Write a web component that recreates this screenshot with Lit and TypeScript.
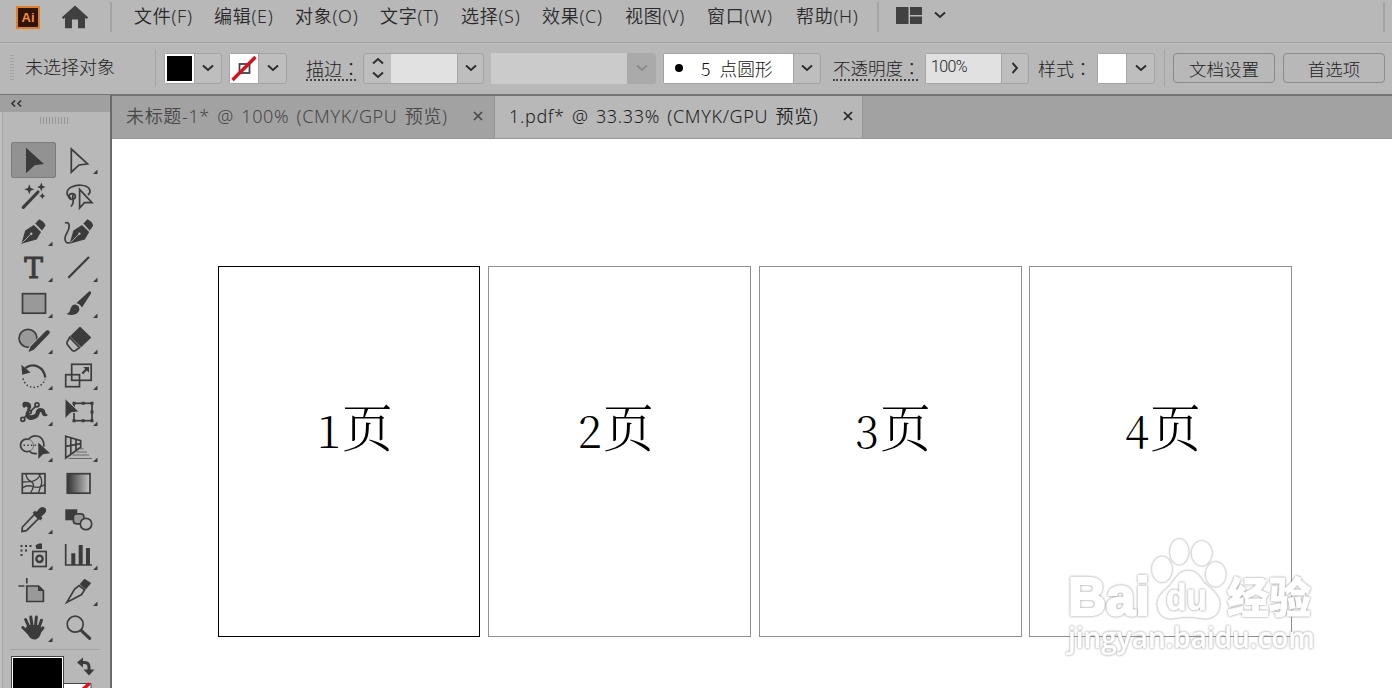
import { LitElement, html, css, svg, nothing } from 'lit';
import type { SVGTemplateResult } from 'lit';
import { customElement, property, state } from 'lit/decorators.js';
import { classMap } from 'lit/directives/class-map.js';

interface Tool {
  id: string;
  icon: SVGTemplateResult;
  flyout?: boolean;
}

const MENUS = ['文件(F)', '编辑(E)', '对象(O)', '文字(T)', '选择(S)', '效果(C)', '视图(V)', '窗口(W)', '帮助(H)'];

// icons share a 45x36 cell, d = dark fill, l = dark outline
const TOOLS: Tool[] = [
  {
    id: 'selection',
    icon: svg`<path class="d" d="M15 5.7 33 22 23.7 23.3 15 31.3Z"/>`,
  },
  {
    id: 'direct-selection',
    flyout: true,
    icon: svg`<path class="l" d="M15.3 7 31.6 21.8 23 23 15.3 30.2Z"/>`,
  },
  {
    id: 'magic-wand',
    icon: svg`
      <path class="l w3" d="M12.3 29.3 27 14"/>
      <path class="d" d="M18.3 6.3 19.7 9.9 23.3 11.3 19.7 12.7 18.3 16.3 16.9 12.7 13.3 11.3 16.9 9.9Z"/>
      <path class="d" d="M30.3 4.6 31.5 7.8 34.6 9 31.5 10.2 30.3 13.4 29.1 10.2 26 9 29.1 7.8Z"/>
      <path class="d" d="M31.3 14.8 32.3 17 34.4 18 32.3 19 31.3 21.2 30.3 19 28.2 18 30.3 17Z"/>`,
  },
  {
    id: 'lasso',
    icon: svg`
      <path class="l" d="M15 19.8C9.5 18 9.8 11.5 15.5 9 21.5 6 30 6.8 33 10.4 34.8 12.8 34 15.2 32 17"/>
      <path class="l" d="M19.4 18.3C19.4 14.5 12.6 14.8 12.8 18.8 13 22.4 19.6 22 19.4 18.3ZM18 16C14 19.5 20.5 22.5 15 28.5"/>
      <path class="l" d="M23.6 11.5V30L28.4 24.7H36Z"/>`,
  },
  {
    id: 'pen',
    flyout: true,
    icon: svg`
      <path class="d" d="M10.4 29.8 14.2 16.6 22.8 10.9 30 18 25.6 25.6Z"/>
      <path class="d" d="M24.2 9.6 28.2 5.2Q32.8 7.2 34.6 11.4L31 16.4Z"/>
      <path class="k" d="M11.5 28.5 20 20"/><circle class="b" cx="20.3" cy="19.8" r="1.2"/>`,
  },
  {
    id: 'curvature',
    icon: svg`
      <path class="d" d="M13.6 29.8 17.4 16.6 26 10.9 33.2 18 28.8 25.6Z"/>
      <path class="d" d="M27.4 9.6 31.4 5.2Q36 7.2 37.2 11.4L33.8 16.4Z"/>
      <path class="k" d="M14.7 28.5 23 20"/><circle class="b" cx="23.4" cy="19.8" r="1.2"/>
      <path class="l" d="M9 9C14.5 7 14 14 10.8 19.3 7.4 24.8 9.3 30.5 14 28.5"/>`,
  },
  {
    id: 'type',
    flyout: true,
    icon: svg`<text class="type" x="22.5" y="28" text-anchor="middle">T</text>`,
  },
  {
    id: 'line',
    flyout: true,
    icon: svg`<path class="l w2" d="M12.3 27.7 33 7"/>`,
  },
  {
    id: 'rectangle',
    flyout: true,
    icon: svg`<rect class="l g" x="11.5" y="7.7" width="23" height="19.5"/>`,
  },
  {
    id: 'paintbrush',
    flyout: true,
    icon: svg`
      <path class="d" d="M20.4 17 33 5.4Q35.6 4.8 35 7.4L26 21.4Q24 17.8 20.4 17Z"/>
      <path class="d" d="M10.2 28Q14 27 14.4 23 16 18.4 19.4 18.6 23.6 19.6 23.4 24 20.6 31 10.2 28Z"/>`,
  },
  {
    id: 'shaper',
    flyout: true,
    icon: svg`
      <circle class="l g" cx="17" cy="16.3" r="9"/>
      <path class="halo" d="M19.5 27.5 37 10.5"/>
      <path class="d" d="M17.5 30 19.5 24.4 35.3 8.6Q37.5 7.8 38.6 9.6 39.2 10.6 38.3 11.8L22.8 27.8Z"/>`,
  },
  {
    id: 'eraser',
    flyout: true,
    icon: svg`
      <path class="d" d="M24 4.5 35.3 15.6 25.2 25.2 14 14.2Z"/>
      <path class="l" d="M13.6 15.5 11 20.2Q10.6 21.6 11.5 22.7L16 28.2Q17.3 29.6 19 28.7L23.5 25.7Z"/>`,
  },
  {
    id: 'rotate',
    flyout: true,
    icon: svg`
      <path class="l w2" d="M14.5 10C22 4 33 9 34.3 19.5"/>
      <path class="d" d="M10.4 6.8 19.6 14.4 11.2 16.8Z"/>
      <path class="dots" d="M12 20.5C14.5 32 30.5 32.5 34 21"/>`,
  },
  {
    id: 'scale',
    flyout: true,
    icon: svg`
      <rect class="l" x="15.7" y="6.3" width="19.5" height="16"/>
      <rect class="l" x="9.7" y="16.7" width="13.8" height="12"/>
      <path class="l w2" d="M26.3 15.5 31 10.8"/><path class="d" d="M27.3 9H33V14.8Z"/>`,
  },
  {
    id: 'width',
    flyout: true,
    icon: svg`
      <path class="d" d="M12.5 8C20 7 22 12 18.5 17 16.5 21.5 21 22.5 24.4 19.5 25 13.5 31 12.5 34 16.5 34.4 20 36 20.5 37 21 34 23.8 30.8 22 30.5 18.5 28.5 16.5 29 21 26.5 23.6 20.5 28.6 13.2 25.5 14.8 18.8 18 13.6 16.5 11 13 14 11 12.5 10.8 9.5 12.5 8Z"/>
      <path class="l" d="M13 24 25 11.8"/>
      <circle class="l b" cx="11.8" cy="25.3" r="2"/><circle class="l b" cx="26" cy="10.8" r="2"/>
      <circle class="l b" cx="18.8" cy="18.2" r="1.5"/>`,
  },
  {
    id: 'free-transform',
    flyout: true,
    icon: svg`
      <rect class="l" x="18" y="9.3" width="18" height="17.4"/>
      <path class="d" d="M16.5 7.8h3v3h-3zM25.7 7.8h3v3h-3zM34.5 7.8h3v3h-3zM34.5 16.5h3v3h-3zM34.5 25.2h3v3h-3zM25.7 25.2h3v3h-3zM16.5 25.2h3v3h-3z"/>
      <path class="d edge" d="M9 4.5 23.2 17.7 14.7 18.9 9 24.8Z"/>`,
  },
  {
    id: 'shape-builder',
    flyout: true,
    icon: svg`
      <path class="l" d="M17.5 9.4C11.8 7.8 8.6 13 9.8 17 11 21 15 22.4 18.5 21.2 20 23 23 24 26 23.5M17.5 9.4C21.5 4.4 30 4.6 32.2 11.4 33 13.4 33.2 15 32.8 16.6"/>
      <path class="l thin" d="M17.5 9.4C23 10.4 25 18.5 18.5 21.2"/>
      <path class="dots" d="M12.5 15.3H28"/>
      <path class="d" d="M27.3 12.5 39 23.3 32 24.3 27.3 29Z"/>`,
  },
  {
    id: 'perspective',
    flyout: true,
    icon: svg`
      <path class="l" d="M9.7 6.2 24.7 10.7V17.3L9.7 28ZM14.8 7.8V24.4M20 9.2V20.6M9.7 16.3 24.7 13.7"/>
      <path class="l thin" d="M24 18.8H27.5M20.5 22H31M16.5 25H33M12.5 28.5H36"/>`,
  },
  {
    id: 'mesh',
    icon: svg`
      <rect class="l" x="11.3" y="7.7" width="22.7" height="19.5"/>
      <path class="l thin2" d="M15 7.7Q15 13 20.3 15.6 25 18.4 19.5 27M27.5 7.7Q33 15 29.5 20.5L27.5 27M11.3 16Q17 15.5 20.3 15.6 28 14 29.5 7.7M11.3 22Q16 18.5 22.3 20.5 28 23 34 18.5"/>`,
  },
  {
    id: 'gradient',
    icon: svg`
      <defs><linearGradient id="ramp"><stop offset="0" stop-color="#333"/><stop offset="1" stop-color="#c4c4c4"/></linearGradient></defs>
      <rect class="l ramp" x="11.3" y="7.7" width="22.7" height="19.5"/>`,
  },
  {
    id: 'eyedropper',
    flyout: true,
    icon: svg`
      <path class="l" d="M11 29.4 11.4 25 23.4 12.4 27.6 16.6 15.4 28.6 11 29.4Z"/>
      <path class="d" d="M21.6 10.8 24 8.8 25.6 9.8 28.8 6Q32.4 3.6 34.6 6.6 36 9 34 11.2L30.4 14.4 31.4 16.2 29.2 18.6Z"/>`,
  },
  {
    id: 'blend',
    icon: svg`
      <rect class="d" x="9.3" y="7.3" width="12" height="11"/>
      <rect class="l g" x="17.4" y="11.8" width="10.5" height="10" rx="3"/>
      <circle class="l b" cx="30" cy="22" r="5.7"/>`,
  },
  {
    id: 'symbol-sprayer',
    flyout: true,
    icon: svg`
      <path class="d" d="M9.5 7h2v2h-2zM14 7h2v2h-2zM18.5 7h2v2h-2zM9.5 11.5h2v2h-2zM14 11.5h2v2h-2zM9.5 16h2v2h-2z"/>
      <path class="d" d="M24.5 7.2 27.8 5.6H31V11H25.4Z"/>
      <rect class="l" x="21.8" y="13.5" width="13.4" height="15"/>
      <circle class="l w2" cx="28.5" cy="20.8" r="3.2"/>`,
  },
  {
    id: 'graph',
    flyout: true,
    icon: svg`
      <path class="l" d="M9.7 6V27H36"/>
      <path class="d" d="M15.3 15.3h4V27h-4zM22.7 7h4v20h-4zM30 10h4v17h-4z"/>`,
  },
  {
    id: 'artboard',
    icon: svg`
      <path class="l" d="M15.8 4V9.5M7.5 12H13.5"/>
      <path class="l g" d="M15.8 12H27.5L32.4 16.5V27.5H15.8Z"/><path class="d" d="M27 11.5 33 17H27Z"/>`,
  },
  {
    id: 'slice',
    flyout: true,
    icon: svg`
      <path class="l" d="M10.8 28.4 18.5 15.4 23 11.5 28.6 15.8 25.6 20.5 10.8 28.4Z"/>
      <path class="d" d="M23.6 10.2 28.4 4.8 35.2 9 29.8 15.6Z"/>`,
  },
  {
    id: 'hand',
    flyout: true,
    icon: svg`
      <path class="finger" d="M18 17 14.6 9.5M21 15.5 19.8 7M24.5 15.5 25.4 7M28 17 30.5 10.2M16.5 22 11.8 17.5M28.5 22 32 17.8"/>
      <path class="d" d="M16.5 15H29.5L30.5 21Q29 28.5 24.5 29.4 19.5 29.6 17.4 25.5L13.5 20Z"/>`,
  },
  {
    id: 'zoom',
    icon: svg`<circle class="l" cx="19.2" cy="14.2" r="8"/><path class="l w3" d="M25.4 20.6 33.6 28.4"/>`,
  },
];

const ARTBOARDS = [1, 2, 3, 4];

const chevron = html`
  <svg class="chevron" width="14" height="8" viewBox="0 0 14 8"><path d="M2 1.5 7 6 12 1.5"/></svg>
`;

// full-width colon, centred in its em box
const colon = html`<span class="colon">：</span>`;

@customElement('ai-tool')
export class AiTool extends LitElement {
  @property({ type: Object })
  tool?: Tool;

  @property({ type: Boolean, reflect: true })
  active = false;

  static styles = css`
    :host {
      display: block;
      width: 45px;
      height: 36px;
    }

    :host([active]) {
      background: #929292;
      border-radius: 3px;
      box-shadow: inset 0 0 0 1px #7c7c7c;
    }

    svg {
      display: block;
    }

    .d {
      fill: #3b3b3b;
    }

    .l {
      fill: none;
      stroke: #3d3d3d;
      stroke-width: 1.7;
    }

    .w2 {
      stroke-width: 2.3;
    }

    .w3 {
      stroke-width: 3.2;
      stroke-linecap: round;
    }

    .thin {
      stroke-width: 0.9;
      stroke: #606060;
    }

    .thin2 {
      stroke-width: 1.3;
    }

    .g {
      fill: #999;
    }

    .b {
      fill: #b8b8b8;
    }

    .k {
      stroke: #b8b8b8;
      stroke-width: 0.9;
    }

    .halo {
      stroke: #b8b8b8;
      stroke-width: 6;
    }

    .edge {
      stroke: #b8b8b8;
      stroke-width: 1;
    }

    .ramp {
      fill: url(#ramp);
    }

    .dots {
      fill: none;
      stroke: #3d3d3d;
      stroke-width: 1.5;
      stroke-dasharray: 1.5 2.2;
    }

    .finger {
      fill: none;
      stroke: #3b3b3b;
      stroke-width: 3;
      stroke-linecap: round;
    }

    .type {
      font: 28px 'DejaVu Serif', serif;
      fill: #3b3b3b;
      stroke: #3b3b3b;
      stroke-width: 1;
    }
  `;

  render() {
    return html`
      <svg width="45" height="36" viewBox="0 0 45 36">
        ${this.tool?.icon}
        ${this.tool?.flyout ? svg`<path class="d" d="M41.5 27.5V32H37Z"/>` : nothing}
      </svg>
    `;
  }
}

@customElement('app-root')
export class AppRoot extends LitElement {
  @state()
  private _activeTool = 'selection';

  static styles = css`
    :host {
      display: flex;
      flex-direction: column;
      width: 1392px;
      height: 688px;
      overflow: hidden;
      background: #b8b8b8;
      color: #2a2a2a;
      font-family: 'Noto Sans', 'Noto Sans CJK SC', sans-serif;
      font-size: 18px;
      font-weight: 350;
    }

    svg {
      display: block;
      flex: none;
    }

    .chevron path {
      fill: none;
      stroke: #2c2c2c;
      stroke-width: 1.9;
    }

    .menu-bar {
      display: grid;
      grid-template-columns: 16px 45px 49px 24px 80px 81px 85px 81px 81px 83px 82px 89px 81px 19px 37px 450px 9px;
      align-items: center;
      height: 34px;
      padding-bottom: 8px;
      border-bottom: 1px solid #9c9c9c;
      white-space: nowrap;
    }

    .menu-bar span {
      padding-bottom: 4px;
      letter-spacing: 0.7px;
    }

    .ai-logo {
      display: flex;
      align-items: center;
      justify-content: center;
      width: 20px;
      height: 19px;
      border: 2px solid #e0802a;
      background: #311308;
      color: #f0903a;
      font: bold 13px/1 'Liberation Sans', sans-serif;
    }

    .divider {
      width: 2px;
      height: 30px;
      background: #a4a4a4;
    }

    .control-bar {
      display: grid;
      grid-template-columns: 10px 15px 130px 9px 65px 77px 57px 128px 172px 170px 92px 113px 59px 67px 9px 110px 109px;
      align-items: center;
      box-sizing: border-box;
      height: 53px;
      padding-bottom: 2px;
      border-top: 1px solid #c2c2c2;
      border-bottom: 2px solid #747474;
      font-family: 'Noto Sans CJK SC', sans-serif;
      font-weight: 300;
      color: #222;
      white-space: nowrap;
    }

    .grip {
      width: 4px;
      height: 26px;
      background: repeating-linear-gradient(#a2a2a2 0 1px, transparent 1px 3px);
    }

    .thin-divider {
      width: 1px;
      height: 38px;
      background: #a6a6a6;
    }

    .field {
      display: flex;
      box-sizing: border-box;
      height: 31px;
      border: 1px solid #a3a3a3;
      border-radius: 3px;
      background: #bebebe;
    }

    .field > .drop {
      display: flex;
      flex: 1;
      align-items: center;
      justify-content: center;
      border-left: 1px solid #a6a6a6;
    }

    .swatch {
      width: 28px;
      background: #fff;
    }

    .swatch.black {
      width: 25px;
      border: 2px solid #fff;
      background: #000;
    }

    .w57 {
      width: 58px;
    }

    .w121 {
      width: 121px;
    }

    .w158 {
      width: 158px;
    }

    .w104 {
      width: 104px;
    }

    .steps {
      display: flex;
      flex-direction: column;
      align-items: center;
      justify-content: center;
      gap: 6px;
      width: 27px;
    }

    .steps svg:first-child {
      transform: scaleY(-1);
    }

    .value {
      width: 66px;
      background: #e1e1e1;
    }

    .opacity-value {
      width: 70px;
      padding-left: 5px;
      background: #e1e1e1;
      font: 300 16px/26px Roboto, sans-serif;
      letter-spacing: -0.6px;
    }

    .brush {
      display: flex;
      align-items: center;
      width: 129px;
      background: #fff;
      color: #111;
      font-size: 17.7px;
      line-height: 29px;
    }

    .brush::before {
      content: '';
      width: 8px;
      height: 8px;
      margin: 0 18px 0 11px;
      border-radius: 50%;
      background: #000;
    }

    .brush span {
      margin-right: 9px;
    }

    .disabled {
      width: 165px;
      border: none;
      background: #aaa;
    }

    .disabled .blank {
      width: 136px;
      background: #cbcbcb;
    }

    .disabled .chevron path {
      stroke: #8a8a8a;
    }

    .disabled .drop {
      border: none;
    }

    .label {
      justify-self: start;
      line-height: 22px;
    }

    .label.status {
      padding-bottom: 4px;
    }

    .colon {
      font-family: 'Noto Sans CJK TC', sans-serif;
    }

    .link {
      border-bottom: 2px dotted #444;
      margin-top: 2px;
    }

    .label.stroke {
      width: 50px;
    }

    .label.opacity {
      width: 85px;
      font-size: 17.5px;
    }

    .button {
      display: flex;
      align-items: center;
      justify-content: center;
      box-sizing: border-box;
      width: 102px;
      height: 30px;
      border: 1.5px solid #8c8c8c;
      border-radius: 4px;
      font-size: 17.5px;
    }

    .workspace {
      display: flex;
      flex: 1;
      min-height: 0;
    }

    .toolbar {
      box-sizing: border-box;
      width: 112px;
      margin-top: -1px;
      border-right: 2px solid #6a6a6a;
      box-shadow: inset 2px 0 #c0c0c0, inset 3px 0 #a9a9a9;
    }

    .collapse {
      height: 17px;
      padding-left: 10px;
      background: #a0a0a0;
    }

    .collapse path {
      fill: none;
      stroke: #333;
      stroke-width: 1.6;
    }

    .handle {
      width: 29px;
      height: 7px;
      margin: 5px 0 0 40px;
      background: repeating-linear-gradient(90deg, #969696 0 1px, transparent 1px 3px);
    }

    .tools {
      display: grid;
      grid-template-columns: 45px 45px;
      padding: 18px 0 0 11px;
    }

    .rule {
      height: 1px;
      margin: 3px 10px 6px;
      background: #a3a3a3;
    }

    .paint {
      display: flex;
      align-items: flex-start;
      padding-left: 11px;
    }

    .fill {
      width: 49px;
      height: 49px;
      margin: 1px;
      border: 1px solid #fff;
      outline: 1px solid #444;
      background: #000;
    }

    .document {
      display: flex;
      flex: 1;
      flex-direction: column;
      background: #fff;
    }

    .tabs {
      display: flex;
      height: 42px;
      border-bottom: 1px solid #979797;
      background: #a2a2a2;
    }

    .tab {
      display: flex;
      align-items: center;
      justify-content: space-between;
      box-sizing: border-box;
      width: 383px;
      padding: 0 11px 2px 14px;
      border-right: 1px solid #949494;
      color: #484848;
      letter-spacing: 0.65px;
      word-spacing: 2px;
      white-space: nowrap;
    }

    .tab.current {
      width: 368px;
      padding-right: 9px;
      background: #b8b8b8;
      color: #222;
    }

    .tab span {
      padding-bottom: 2px;
    }

    .tab path {
      fill: none;
      stroke: currentColor;
      stroke-width: 1.7;
    }

    .canvas {
      display: grid;
      position: relative;
      flex: 1;
      grid-template-columns: 270px 271px 270px 263px;
      align-items: start;
      padding: 127px 0 0 106px;
      overflow: hidden;
    }

    .artboard {
      display: flex;
      align-items: baseline;
      box-sizing: border-box;
      width: 263px;
      height: 371px;
      padding: 120px 0 0 94px;
      border: 1px solid #8f8f8f;
      color: #000;
      font: 300 51px/76px 'Noto Serif CJK SC', serif;
      white-space: nowrap;
    }

    .artboard .number {
      width: 26px;
      transform: translateY(1px);
      font-size: 44px;
      text-align: center;
    }

    .artboard.current {
      width: 262px;
      padding-left: 97px;
      border-color: #000;
    }

    .artboard.second {
      padding-left: 88px;
    }

    .watermark {
      position: absolute;
      left: 948px;
      top: 391px;
    }

    .watermark .shape {
      fill: #fff;
      stroke: #fff;
      stroke-width: 0.8;
      filter: drop-shadow(0 0 0.9px #888);
    }

    .watermark .bai {
      font: bold 54px 'Liberation Sans', sans-serif;
      stroke-width: 2.4;
    }

    .watermark .du {
      font: bold 36px 'Liberation Sans', sans-serif;
    }

    .watermark .cn {
      font: 900 42px 'Noto Sans CJK SC', sans-serif;
    }

    .watermark .url {
      font: 600 29px 'Open Sans', sans-serif;
      stroke-width: 0.3;
    }
  `;

  private _selectTool(id: string) {
    this._activeTool = id;
  }

  private _renderMenuBar() {
    return html`
      <div class="menu-bar">
        <i></i>
        <div class="ai-logo">Ai</div>
        <svg width="28" height="24" viewBox="0 0 28 24">
          <path fill="#404040" d="M14 .5 27.3 12.5 25.6 14 24 12.8V23.3H17V14.5H11V23.3H4V12.8L2.4 14 .7 12.5Z"/>
        </svg>
        <div class="divider"></div>
        ${MENUS.map((menu) => html`<span>${menu}</span>`)}
        <div class="divider"></div>
        <svg width="26" height="20" viewBox="0 0 26 20">
          <path fill="#414141" d="M0 0h12.5v17H0zM14 0h12v8H14zM14 9.5h12V17H14z"/>
        </svg>
        <svg class="chevron" width="14" height="12" viewBox="0 0 14 12"><path d="M2 1.5 7 6 12 1.5"/></svg>
        <div class="divider"></div>
      </div>
    `;
  }

  private _renderControlBar() {
    return html`
      <div class="control-bar">
        <i></i>
        <div class="grip"></div>
        <span class="label status">未选择对象</span>
        <div class="thin-divider"></div>
        <div class="field w57"><div class="swatch black"></div><div class="drop">${chevron}</div></div>
        <div class="field w57">
          <div class="swatch">
            <svg width="28" height="29" viewBox="0 0 28 29">
              <rect x="9.5" y="10" width="10" height="9" fill="none" stroke="#444" stroke-width="1.8"/>
              <path d="M2.5 26 25.5 3" stroke="#cf1420" stroke-width="3.4"/>
            </svg>
          </div>
          <div class="drop">${chevron}</div>
        </div>
        <span class="label link stroke">描边${colon}</span>
        <div class="field w121">
          <div class="steps">${chevron}${chevron}</div>
          <div class="value"></div>
          <div class="drop">${chevron}</div>
        </div>
        <div class="field disabled"><div class="blank"></div><div class="drop">${chevron}</div></div>
        <div class="field w158">
          <div class="brush"><span>5</span>点圆形</div>
          <div class="drop">${chevron}</div>
        </div>
        <span class="label link opacity">不透明度${colon}</span>
        <div class="field w104">
          <div class="opacity-value">100%</div>
          <div class="drop">
            <svg class="chevron" width="8" height="14" viewBox="0 0 8 14"><path d="M1.5 2 6 7 1.5 12"/></svg>
          </div>
        </div>
        <span class="label">样式${colon}</span>
        <div class="field w57"><div class="swatch"></div><div class="drop">${chevron}</div></div>
        <div class="thin-divider"></div>
        <div class="button">文档设置</div>
        <div class="button">首选项</div>
      </div>
    `;
  }

  private _renderToolbar() {
    return html`
      <div class="toolbar">
        <div class="collapse">
          <svg width="13" height="17" viewBox="0 0 13 17"><path d="M5 5.5 2 8.5 5 11.5M11 5.5 8 8.5 11 11.5"/></svg>
        </div>
        <div class="handle"></div>
        <div class="tools">
          ${TOOLS.map((tool) => html`
            <ai-tool
              .tool=${tool}
              ?active=${tool.id === this._activeTool}
              @click=${() => this._selectTool(tool.id)}
            ></ai-tool>
          `)}
        </div>
        <div class="rule"></div>
        <div class="paint">
          <div class="fill"></div>
          <svg width="34" height="33" viewBox="0 0 34 33">
            <path fill="none" stroke="#3b3b3b" stroke-width="3" d="M17 6.5H20.5Q25 6.5 25 11V14"/>
            <path fill="#3b3b3b" d="M13 6.5 19 1.5V11.5ZM19.5 13.5H30.5L25 19.5Z"/>
            <path fill="#fff" stroke="#444" d="M-1 27.5H27V34H-1Z"/>
            <path fill="none" stroke="#e01020" stroke-width="3.5" d="M17 35 25.5 27.5"/>
          </svg>
        </div>
      </div>
    `;
  }

  private _renderTab(title: string, current: boolean) {
    return html`
      <div class=${classMap({ tab: true, current })}>
        <span>${title}</span>
        <svg width="10" height="10" viewBox="0 0 10 10"><path d="M1 1 9 9M9 1 1 9"/></svg>
      </div>
    `;
  }

  private _renderWatermark() {
    return html`
      <svg class="watermark" width="270" height="140" viewBox="1060 530 270 140">
        <text class="shape bai" x="1068" y="615" textLength="82" lengthAdjust="spacingAndGlyphs">Bai</text>
        <ellipse class="shape" cx="1179.3" cy="551.7" rx="9" ry="12.5"/>
        <ellipse class="shape" cx="1201.7" cy="553.3" rx="9.7" ry="12"/>
        <ellipse class="shape" cx="1162" cy="569.3" rx="9.7" ry="12.5"/>
        <ellipse class="shape" cx="1215.7" cy="574.3" rx="9.7" ry="12"/>
        <path class="shape" d="M1188 571C1199 571 1200 580 1207 586 1215 592 1221 599 1219 607 1217 619 1206 619 1199 617.5 1192 616 1184 616 1177 617.5 1170 619 1160 619 1158 607 1156 598 1163 592 1169 587 1176 580 1178 571 1188 571Z"/>
        <text class="shape du" x="1166" y="609.5" textLength="41" lengthAdjust="spacingAndGlyphs">du</text>
        <text class="shape cn" x="1227" y="613" textLength="84">经验</text>
        <text class="shape url" x="1068" y="648" textLength="247" lengthAdjust="spacingAndGlyphs">jingyan.baidu.com</text>
      </svg>
    `;
  }

  render() {
    return html`
      ${this._renderMenuBar()}
      ${this._renderControlBar()}
      <div class="workspace">
        ${this._renderToolbar()}
        <div class="document">
          <div class="tabs">
            ${this._renderTab('未标题-1* @ 100% (CMYK/GPU 预览)', false)}
            ${this._renderTab('1.pdf* @ 33.33% (CMYK/GPU 预览)', true)}
          </div>
          <div class="canvas">
            ${ARTBOARDS.map((page) => html`
              <div class=${classMap({ artboard: true, current: page === 1, second: page === 2 })}>
                <span class="number">${page}</span>页
              </div>
            `)}
            ${this._renderWatermark()}
          </div>
        </div>
      </div>
    `;
  }
}

declare global {
  interface HTMLElementTagNameMap {
    'ai-tool': AiTool;
    'app-root': AppRoot;
  }
}
